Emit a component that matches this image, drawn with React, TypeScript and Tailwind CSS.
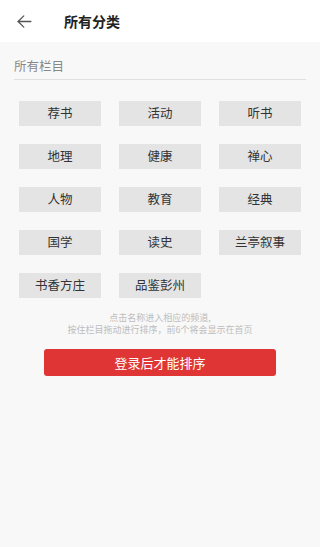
import React from "react";

const items = ["荐书", "活动", "听书", "地理", "健康", "禅心", "人物", "教育", "经典", "国学", "读史", "兰亭叙事", "书香方庄", "品鉴彭州"];

export default function App() {
  return (
    <div
      className="w-[320px] h-[547px] flex flex-col bg-[#f8f8f8]"
      style={{ fontFamily: '"Noto Sans CJK SC", "Noto Sans", sans-serif' }}
    >
      <div className="h-[42px] bg-white flex items-center shrink-0">
        <svg className="ml-[16px] w-[17px] h-[17px]" viewBox="0 0 24 24" fill="none" stroke="#555" strokeWidth="1.8" strokeLinecap="round" strokeLinejoin="round">
          <path d="M21 12H3" />
          <path d="M11 4l-8 8 8 8" />
        </svg>
        <span className="ml-[31px] text-[14px] font-bold text-[#222] leading-none">所有分类</span>
      </div>
      <div className="px-[14px] pt-[15px]">
        <div className="text-[12.5px] text-[#888] leading-[18px] pb-[4px] border-b border-[#e0e0e0]">所有栏目</div>
      </div>
      <div className="grid grid-cols-[82px_82px_82px] gap-x-[18px] gap-y-[18px] pl-[19px] mt-[21px]">
        {items.map((t) => (
          <div key={t} className="h-[25px] bg-[#e4e4e4] flex items-center justify-center text-[12.5px] text-[#333]">
            {t}
          </div>
        ))}
      </div>
      <div className="mt-[14px] flex flex-col items-center gap-0 text-[9px] leading-[12px] text-[#bdbdbd]">
        <div>点击名称进入相应的频道,</div>
        <div>按住栏目拖动进行排序，前6个将会显示在首页</div>
      </div>
      <div className="mx-[44px] mt-[13px] h-[27px] rounded-[3px] bg-[#e03535] flex items-center justify-center text-white text-[13px]">
        登录后才能排序
      </div>
    </div>
  );
}
